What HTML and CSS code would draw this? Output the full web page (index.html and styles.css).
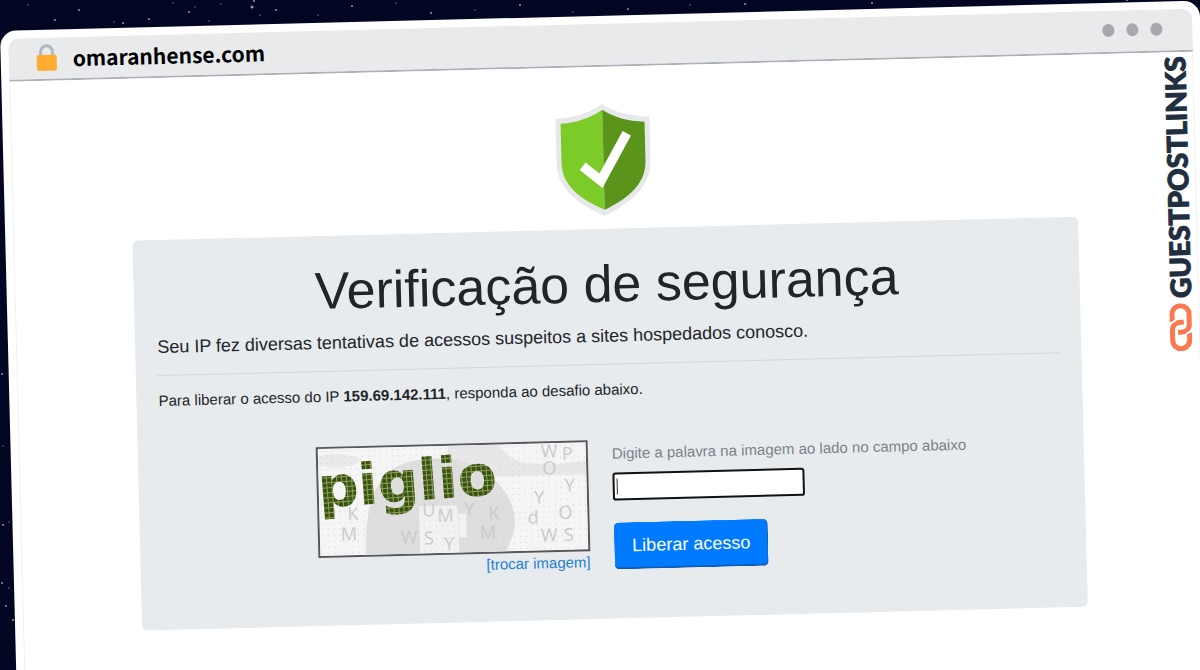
FILE: index.html
```html
<!DOCTYPE html>
<html lang="pt-BR">
<head>
<meta charset="utf-8">
<title>Verificação de segurança</title>
<link rel="stylesheet" href="styles.css">
</head>
<body>
<svg class="stars" aria-hidden="true">
  <g fill="#8f96bb">
    <circle cx="79" cy="10" r="1"/><circle cx="149" cy="19" r="1"/><circle cx="123" cy="23" r="1"/><circle cx="55" cy="20" r="1"/>
    <circle cx="189" cy="12" r="1"/><circle cx="252" cy="7" r="1.5"/><circle cx="276" cy="10" r="1"/><circle cx="254" cy="1" r="1"/>
    <circle cx="352" cy="6" r="1"/><circle cx="431" cy="13" r="1"/><circle cx="520" cy="5" r="1"/><circle cx="628" cy="9" r="1"/>
    <circle cx="745" cy="4" r="1"/><circle cx="872" cy="3" r="1"/><circle cx="1127" cy="0" r="1"/><circle cx="3" cy="525" r="1"/>
    <circle cx="6" cy="606" r="1"/><circle cx="13" cy="620" r="1"/><circle cx="2" cy="583" r="1"/><circle cx="2" cy="374" r="1"/>
  </g>
  <g fill="#3d4470">
    <circle cx="114" cy="22" r="1"/><circle cx="173" cy="3" r="1"/><circle cx="195" cy="7" r="1"/><circle cx="209" cy="21" r="1"/>
    <circle cx="221" cy="4" r="1"/><circle cx="260" cy="15" r="1"/><circle cx="28" cy="5" r="1"/><circle cx="318" cy="15" r="1"/>
    <circle cx="396" cy="3" r="1"/><circle cx="475" cy="10" r="1"/><circle cx="573" cy="12" r="1"/><circle cx="690" cy="5" r="1"/>
    <circle cx="9" cy="522" r="1"/><circle cx="9" cy="588" r="1"/><circle cx="3" cy="446" r="1"/>
  </g>
</svg>
<div class="browser">
  <header class="bar">
    <svg class="lock" viewBox="0 0 22 28" aria-hidden="true">
      <path d="M5 13V8.500a6 6.500 0 0 1 12 0V13" fill="none" stroke="#aeb7c2" stroke-width="3"/>
      <rect x="1" y="11" width="20" height="16" rx="2" fill="#ffac33"/>
    </svg>
    <span class="address">omaranhense.com</span>
    <span class="dots"><i class="dot"></i><i class="dot"></i><i class="dot"></i></span>
  </header>
  <main class="page">
    <svg class="shield" viewBox="0 0 96 112" aria-label="Escudo">
      <path d="M48 0C36 9 20 13 1 14v44c0 25 19 41 47 54 28-13 47-29 47-54V14C76 13 60 9 48 0Z" fill="#e7e8e9"/>
      <path d="M48 6C36 14 23 18 6 19v39c0 22 16 36 42 48Z" fill="#7ccb28"/>
      <path d="M48 6c12 8 25 12 42 13v39c0 22-16 36-42 48Z" fill="#5b941b"/>
      <path d="M27 62 45 77 72 30" fill="none" stroke="#fff" stroke-width="9.500"/>
    </svg>
    <section class="panel">
      <h1 class="title">Verificação de segurança</h1>
      <p class="lead">Seu IP fez diversas tentativas de acessos suspeitos a sites hospedados conosco.</p>
      <hr class="rule">
      <p class="note">Para liberar o acesso do IP <strong>159.69.142.111</strong>, responda ao desafio abaixo.</p>
      <form class="challenge">
        <div class="picture">
          <svg class="captcha" viewBox="0 0 268 107" aria-label="Captcha">
            <defs>
              <pattern id="cells" width="5" height="5" patternUnits="userSpaceOnUse">
                <rect width="5" height="5" fill="#8fa05c"/><rect width="4" height="4" fill="#38520f"/>
              </pattern>
              <pattern id="grid" width="6" height="6" patternUnits="userSpaceOnUse">
                <rect x="2" y="2" width="1" height="1" fill="#d2d2d2"/>
              </pattern>
            </defs>
            <rect width="268" height="107" fill="#f5f5f5"/>
            <path d="M0 8q20-7 43 3-8 12-43 6Z" fill="#e9e9e9"/>
            <path d="M130 0h50q8 12 22 18 30 6 66 0v14H180l-50-10Z" fill="#e7e7e7"/>
            <path d="M46 107Q44 20 98 14 150 6 177 36q32 34 8 71h-46l-1-39h-38v39Z" fill="#dedede"/>
            <path d="M138 107h-38V60h38Z" fill="#f2f2f2"/>
            <path d="M139 68h8v24h-8z" fill="#f2f2f2"/>
            <rect width="268" height="107" fill="url(#grid)"/>
            <g class="noise">
              <text x="21" y="92">M</text><text x="28" y="72">K</text><text x="81" y="97">W</text><text x="104" y="98">S</text>
              <text x="118" y="76">M</text><text x="103" y="70">U</text><text x="145" y="70">Y</text><text x="169" y="75">K</text>
              <text x="160" y="94">M</text><text x="124" y="104">Y</text><text x="224" y="31">O</text>
              <text x="223" y="14">W</text><text x="244" y="17">P</text><text x="215" y="60">Y</text><text x="246" y="49">Y</text>
              <text x="208" y="80">d</text><text x="239" y="76">O</text><text x="221" y="98">W</text><text x="244" y="98">S</text>
            </g>
            <text class="word" x="0" y="59" transform="rotate(-3 0 59)" fill="url(#cells)">piglio</text>
          </svg>
          <a class="swap" href="#">[trocar imagem]</a>
        </div>
        <div class="answer">
          <label class="label" for="word">Digite a palavra na imagem ao lado no campo abaixo</label>
          <span class="field"><input class="input" id="word" type="text"><i class="caret"></i></span>
          <button class="submit" type="button">Liberar acesso</button>
        </div>
      </form>
    </section>
    <aside class="brand">
      <span class="brand-name">GUESTPOSTLINKS</span>
      <svg class="brand-icon" viewBox="0 0 24 48" fill="none" stroke="#fc7850" stroke-width="5" aria-hidden="true">
        <path d="M3.500 18.500V11a8.500 8.500 0 0 1 17 0v10c0 5-3.500 8-8.500 8h-3"/>
        <path d="M20.500 29.500V37a8.500 8.500 0 0 1-17 0V27c0-5 3.500-8 8.500-8h3"/>
        <path d="M0 21 7 17M24 27l-7 4" stroke="#fff" stroke-width="2"/>
      </svg>
    </aside>
  </main>
</div>
</body>
</html>
```
FILE: styles.css
```css
* { box-sizing: border-box; }

body {
  margin: 0;
  height: 100vh;
  overflow: hidden;
  background: #030623;
  color: #212529;
  font-family: "Liberation Sans", Arial, sans-serif;
}

.stars {
  position: absolute;
  width: 100%;
  height: 100%;
}

.browser {
  position: relative;
  margin-top: 31px;
  min-height: 101vh;
  padding: 8px 8px 0;
  display: flex;
  flex-direction: column;
  background: #fff;
  border-radius: 16px 16px 0 0;
  transform: rotate(-1.45deg);
  transform-origin: 0 0;
}

.bar {
  height: 43px;
  display: flex;
  align-items: center;
  padding: 0 30px 2px 27px;
  background: #e8eaec;
  border-bottom: 2px solid #adb0b6;
  border-radius: 10px 10px 0 0;
}

.lock { width: 22px; height: 28px; }

.address {
  flex: 1;
  margin-left: 15px;
  color: #000;
  font: 700 21px/38px "Noto Sans CJK SC", "Noto Sans", sans-serif;
}

.dots { display: flex; gap: 12px; }

.dot {
  width: 12px;
  height: 13px;
  border-radius: 50%;
  background: #a6a8ab;
}

.page {
  position: relative;
  flex: 1;
  display: flex;
  flex-direction: column;
  align-items: center;
  padding-top: 37px;
  border: 1px solid #f0f1f4;
  border-width: 0 1px;
}

.shield { width: 96px; height: 112px; }

.panel {
  width: 80%;
  margin-top: 13px;
  padding: 24px 22px 46px;
  background: #e8ebee;
  border-radius: 5px;
}

.title {
  margin: 0 0 7px;
  font-size: 52px;
  font-weight: 400;
  line-height: 62px;
  text-align: center;
}

.lead {
  margin: 0;
  font-size: 18px;
  line-height: 28px;
}

.rule {
  margin: 14px 0;
  border: 0;
  border-top: 1px solid #d2d5d8;
}

.note {
  margin: 0 0 39px;
  font-size: 15px;
  line-height: 22px;
}

.challenge {
  display: grid;
  grid-template-columns: 1fr 1fr;
}

.picture {
  display: flex;
  flex-direction: column;
  align-items: flex-end;
  padding-right: 23px;
}

.captcha {
  width: 272px;
  height: 111px;
  border: 2px solid #56585b;
}

.noise {
  fill: #cacaca;
  font: 18px "Open Sans", sans-serif;
}

.word { font: bold 57px "DejaVu Sans", sans-serif; }

.swap {
  color: #1f7fd6;
  font-size: 15px;
  line-height: 22px;
  text-decoration: none;
}

.answer {
  display: flex;
  flex-direction: column;
  align-items: flex-start;
  padding-left: 1px;
  padding-top: 3px;
}

.label {
  color: #7b8289;
  font-size: 15px;
  line-height: 22px;
}

.field {
  position: relative;
  margin: 8px 0 22px;
  display: flex;
}

.input {
  width: 192px;
  height: 28px;
  padding: 2px 4px;
  border: 2px solid #111;
  border-radius: 3px;
  background: #fff;
  font-size: 15px;
}

.caret {
  position: absolute;
  left: 4px;
  top: 6px;
  width: 1px;
  height: 16px;
  background: #333;
}

.submit {
  padding: 8px 17px;
  border: 1px solid #007bff;
  border-right-color: #0e5db3;
  border-bottom: 2px solid #0e5db3;
  border-radius: 5px;
  background: #007bff;
  color: #fff;
  font: 18px/28px "Liberation Sans", Arial, sans-serif;
}

.brand {
  position: absolute;
  top: 4px;
  right: 4px;
  display: flex;
  flex-direction: column;
  align-items: center;
  gap: 5px;
}

.brand-name {
  writing-mode: vertical-rl;
  transform: rotate(180deg);
  color: #1f2f3f;
  font: 900 28px/28px Lato, sans-serif;
  -webkit-text-stroke: 1px #1f2f3f;
}

.brand-icon { width: 24px; height: 48px; }
```
